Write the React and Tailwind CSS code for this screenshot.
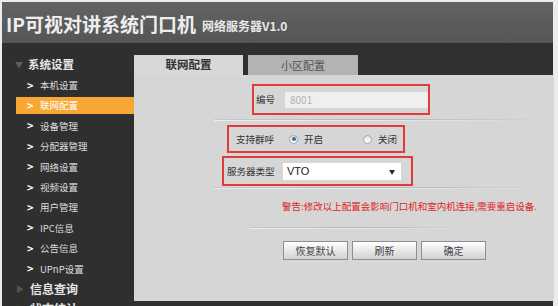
import React from "react";

const cjk = { fontFamily: '"Noto Sans CJK SC", "Noto Sans", sans-serif' };

const menu = [
  "本机设置",
  "联网配置",
  "设备管理",
  "分配器管理",
  "网络设置",
  "视频设置",
  "用户管理",
  "IPC信息",
  "公告信息",
  "UPnP设置",
];

function Sidebar() {
  return (
    <aside className="w-[132px] shrink-0 bg-[#2f2f2f] pt-[12px] overflow-hidden">
      {/* group header */}
      <div className="flex items-center h-[20px] pl-[13px]">
        <span className="text-[8px] text-[#5e5e5e] w-[13px]">▼</span>
        <span className="text-[11.5px] font-bold text-[#e6e6e6]">系统设置</span>
      </div>

      {menu.map((item) => {
        const active = item === "联网配置";
        return (
          <div key={item} className="h-[20.4px] flex items-center">
            <div
              className={`ml-[14px] flex-1 h-[17px] flex items-center pl-[11px] ${
                active ? "bg-[#f7a733]" : ""
              }`}
            >
              <span className="text-[11px] font-bold text-white w-[13px] leading-none">&gt;</span>
              <span className={`text-[9.5px] ${active ? "text-white" : "text-[#dedede]"}`}>{item}</span>
            </div>
          </div>
        );
      })}

      <div className="flex items-center h-[20.4px] pl-[14px]">
        <span className="text-[8px] text-[#555555] w-[14px]">▶</span>
        <span className="text-[12px] font-bold text-[#e6e6e6]">信息查询</span>
      </div>
      <div className="flex items-center h-[20.4px] pl-[14px]">
        <span className="text-[8px] text-[#555555] w-[14px]">▶</span>
        <span className="text-[12px] font-bold text-[#e6e6e6]">状态统计</span>
      </div>
    </aside>
  );
}

function Radio({ checked }) {
  return (
    <span className="w-[9px] h-[9px] rounded-full border border-[#a8a8a8] bg-gradient-to-b from-[#e4e4e4] to-white flex items-center justify-center">
      {checked && <span className="w-[4px] h-[4px] rounded-full bg-[#2f6fa8]" />}
    </span>
  );
}

function Line({ className }) {
  return (
    <div className={`h-[2px] flex flex-col ${className}`}>
      <div className="h-px bg-gradient-to-r from-[#c8c8c8] via-[#b6b6b6] to-transparent" />
      <div className="h-px bg-gradient-to-r from-[#ececec] via-[#e6e6e6] to-transparent" />
    </div>
  );
}

function Button({ children }) {
  return (
    <button className="w-[65px] h-[19px] border border-[#8e8e8e] bg-gradient-to-b from-white to-[#d2d2d2] text-[10px] text-[#444] flex items-center justify-center">
      {children}
    </button>
  );
}

function Panel() {
  return (
    <div className="flex-1 bg-[#d6d6d6] flex flex-col text-[#333]">
      <div className="mt-[9px] ml-[118px] w-[178px] h-[31px] border-2 border-[#e23a3a] flex items-center pl-[2px]">
        <span className="text-[9.5px] w-[29px]">编号</span>
        <div className="w-[143px] h-[16px] bg-[#efefef] flex items-center pl-[5px] text-[10px] text-[#b0b0b0]">8001</div>
      </div>

      <Line className="mt-[4px] ml-[80px] w-[340px]" />

      <div className="mt-[4px] ml-[93px] w-[178px] h-[28px] border-2 border-[#e23a3a] flex items-center pl-[7px] text-[9.5px]">
        <span className="w-[53px]">支持群呼</span>
        <Radio checked />
        <span className="ml-[6px] w-[59px]">开启</span>
        <Radio />
        <span className="ml-[6px]">关闭</span>
      </div>

      <div className="mt-[3px] ml-[88px] w-[191px] h-[30px] border-2 border-[#e23a3a] flex items-center pl-[3px] text-[9.5px]">
        <span className="w-[56px]">服务器类型</span>
        <div className="w-[118px] h-[17px] bg-white flex items-center justify-between pl-[4px] pr-[6px]">
          <span className="text-[11px] text-[#222]" style={{ fontFamily: '"Liberation Sans", sans-serif' }}>VTO</span>
          <span className="text-[6px] text-[#222]">▼</span>
        </div>
      </div>

      <Line className="mt-[1px] ml-[80px] w-[340px]" />

      <div className="mt-[10px] ml-[148px] h-[14px] flex items-center text-[9.5px] text-[#e02424] whitespace-nowrap">
        警告:修改以上配置会影响门口机和室内机连接,需要重启设备.
      </div>

      <Line className="mt-[14px] ml-[116px] w-[220px]" />

      <div className="mt-[12px] ml-[149px] flex gap-[4px]">
        <Button>恢复默认</Button>
        <Button>刷新</Button>
        <Button>确定</Button>
      </div>
    </div>
  );
}

export default function App() {
  return (
    <div className="w-[558px] h-[306px] bg-[#ececec] pt-[2px] pl-[2px] pr-[5px] flex flex-col overflow-hidden" style={cjk}>
      <header className="h-[41px] shrink-0 bg-gradient-to-b from-[#636363] to-[#555555] flex items-end pl-[4px] pb-[10px]">
        <span className="text-[19px] font-bold text-[#eeeeee] leading-none">IP可视对讲系统门口机</span>
        <span className="ml-[6px] text-[12px] font-bold text-[#e8e8e8] leading-none mb-[1px]">网络服务器V1.0</span>
      </header>

      <div className="flex-1 flex bg-[#303030] min-h-0">
        <Sidebar />
        <div className="flex-1 flex flex-col pb-[5px]">
          <div className="h-[32px] shrink-0 flex items-end">
            <div className="w-[109px] h-[20px] bg-[#d8d8d8] flex items-center justify-center text-[11.5px] font-bold text-[#333]">
              联网配置
            </div>
            <div className="ml-[5px] w-[110px] h-[20px] bg-[#b3b3b3] flex items-center justify-center text-[11px] text-[#555]">
              小区配置
            </div>
          </div>
          <Panel />
        </div>
      </div>
    </div>
  );
}
